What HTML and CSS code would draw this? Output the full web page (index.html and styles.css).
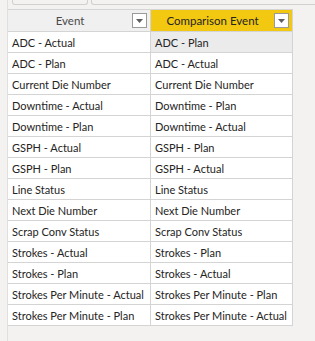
FILE: index.html
```html
<!DOCTYPE html>
<html>
<head>
<meta charset="utf-8">
<link rel="stylesheet" href="styles.css">
</head>
<body>
<div class="page">
  <div class="frame">
    <div class="tabs">
      <div class="tab tab-a"></div>
      <div class="tab tab-b"></div>
    </div>
    <div class="panel">
      <div class="table">
        <div class="hcell h1"><span class="htext">Event</span><span class="dd"><svg width="7" height="4" viewBox="0 0 7 4"><path d="M0 0h7L3.5 4z" fill="#605e5c"/></svg></span></div>
        <div class="hcell h2"><span class="htext">Comparison Event</span><span class="dd"><svg width="7" height="4" viewBox="0 0 7 4"><path d="M0 0h7L3.5 4z" fill="#605e5c"/></svg></span></div>

        <div class="cell">ADC - Actual</div><div class="cell sel">ADC - Plan</div>
        <div class="cell">ADC - Plan</div><div class="cell">ADC - Actual</div>
        <div class="cell">Current Die Number</div><div class="cell">Current Die Number</div>
        <div class="cell">Downtime - Actual</div><div class="cell">Downtime - Plan</div>
        <div class="cell">Downtime - Plan</div><div class="cell">Downtime - Actual</div>
        <div class="cell">GSPH - Actual</div><div class="cell">GSPH - Plan</div>
        <div class="cell">GSPH - Plan</div><div class="cell">GSPH - Actual</div>
        <div class="cell">Line Status</div><div class="cell">Line Status</div>
        <div class="cell">Next Die Number</div><div class="cell">Next Die Number</div>
        <div class="cell">Scrap Conv Status</div><div class="cell">Scrap Conv Status</div>
        <div class="cell">Strokes - Actual</div><div class="cell">Strokes - Plan</div>
        <div class="cell">Strokes - Plan</div><div class="cell">Strokes - Actual</div>
        <div class="cell">Strokes Per Minute - Actual</div><div class="cell">Strokes Per Minute - Plan</div>
        <div class="cell">Strokes Per Minute - Plan</div><div class="cell">Strokes Per Minute - Actual</div>
      </div>
    </div>
  </div>
</div>
</body>
</html>
```
FILE: styles.css
```css
html, body {
  margin: 0;
  padding: 0;
  background: #f3f2f1;
}
.page {
  width: 315px;
  height: 341px;
  overflow: hidden;
  padding-left: 7px;
  box-sizing: border-box;
  font-family: Lato, "Open Sans", sans-serif;
  font-size: 11px;
  color: #252423;
}
.frame {
  height: 341px;
  border-left: 1px solid #e1dfdd;
}
.tabs {
  display: flex;
  height: 5px;
  padding-left: 4px;
  gap: 3px;
}
.tab {
  height: 4px;
  border: 1px solid #d2d0ce;
  border-top: none;
  border-radius: 0 0 3px 3px;
  background: #f3f2f1;
}
.tab-a { width: 74px; }
.tab-b { flex: 1; border-right: none; border-radius: 0 0 0 3px; }
.panel {
  padding-top: 4px;
}
.table {
  display: grid;
  grid-template-columns: 143px 142px;
  grid-auto-rows: 21px;
  grid-template-rows: 22px;
  width: 285px;
  border-top: 1px solid #d4d4d4;
  background: #fff;
}
.hcell {
  display: flex;
  align-items: center;
  padding-right: 3px;
  border-bottom: 1px solid #d4d4d4;
  border-right: 1px solid #d4d4d4;
  box-sizing: border-box;
}
.h1 {
  background: #f0f0f0;
  color: #4a4a4a;
}
.h2 {
  background: #f2c811;
  color: #252423;
}
.htext {
  flex: 1;
  text-align: center;
  font-size: 11.5px;
}
.dd {
  width: 13px;
  height: 13px;
  border: 1px solid #9a9a9a;
  background: #fff;
  display: flex;
  align-items: center;
  justify-content: center;
}
.cell {
  box-sizing: border-box;
  padding-left: 4px;
  display: flex;
  align-items: center;
  border-bottom: 1px solid #d4d4d4;
  border-right: 1px solid #d4d4d4;
  white-space: nowrap;
  overflow: hidden;
}
.sel { background: #ebebeb; }
```
